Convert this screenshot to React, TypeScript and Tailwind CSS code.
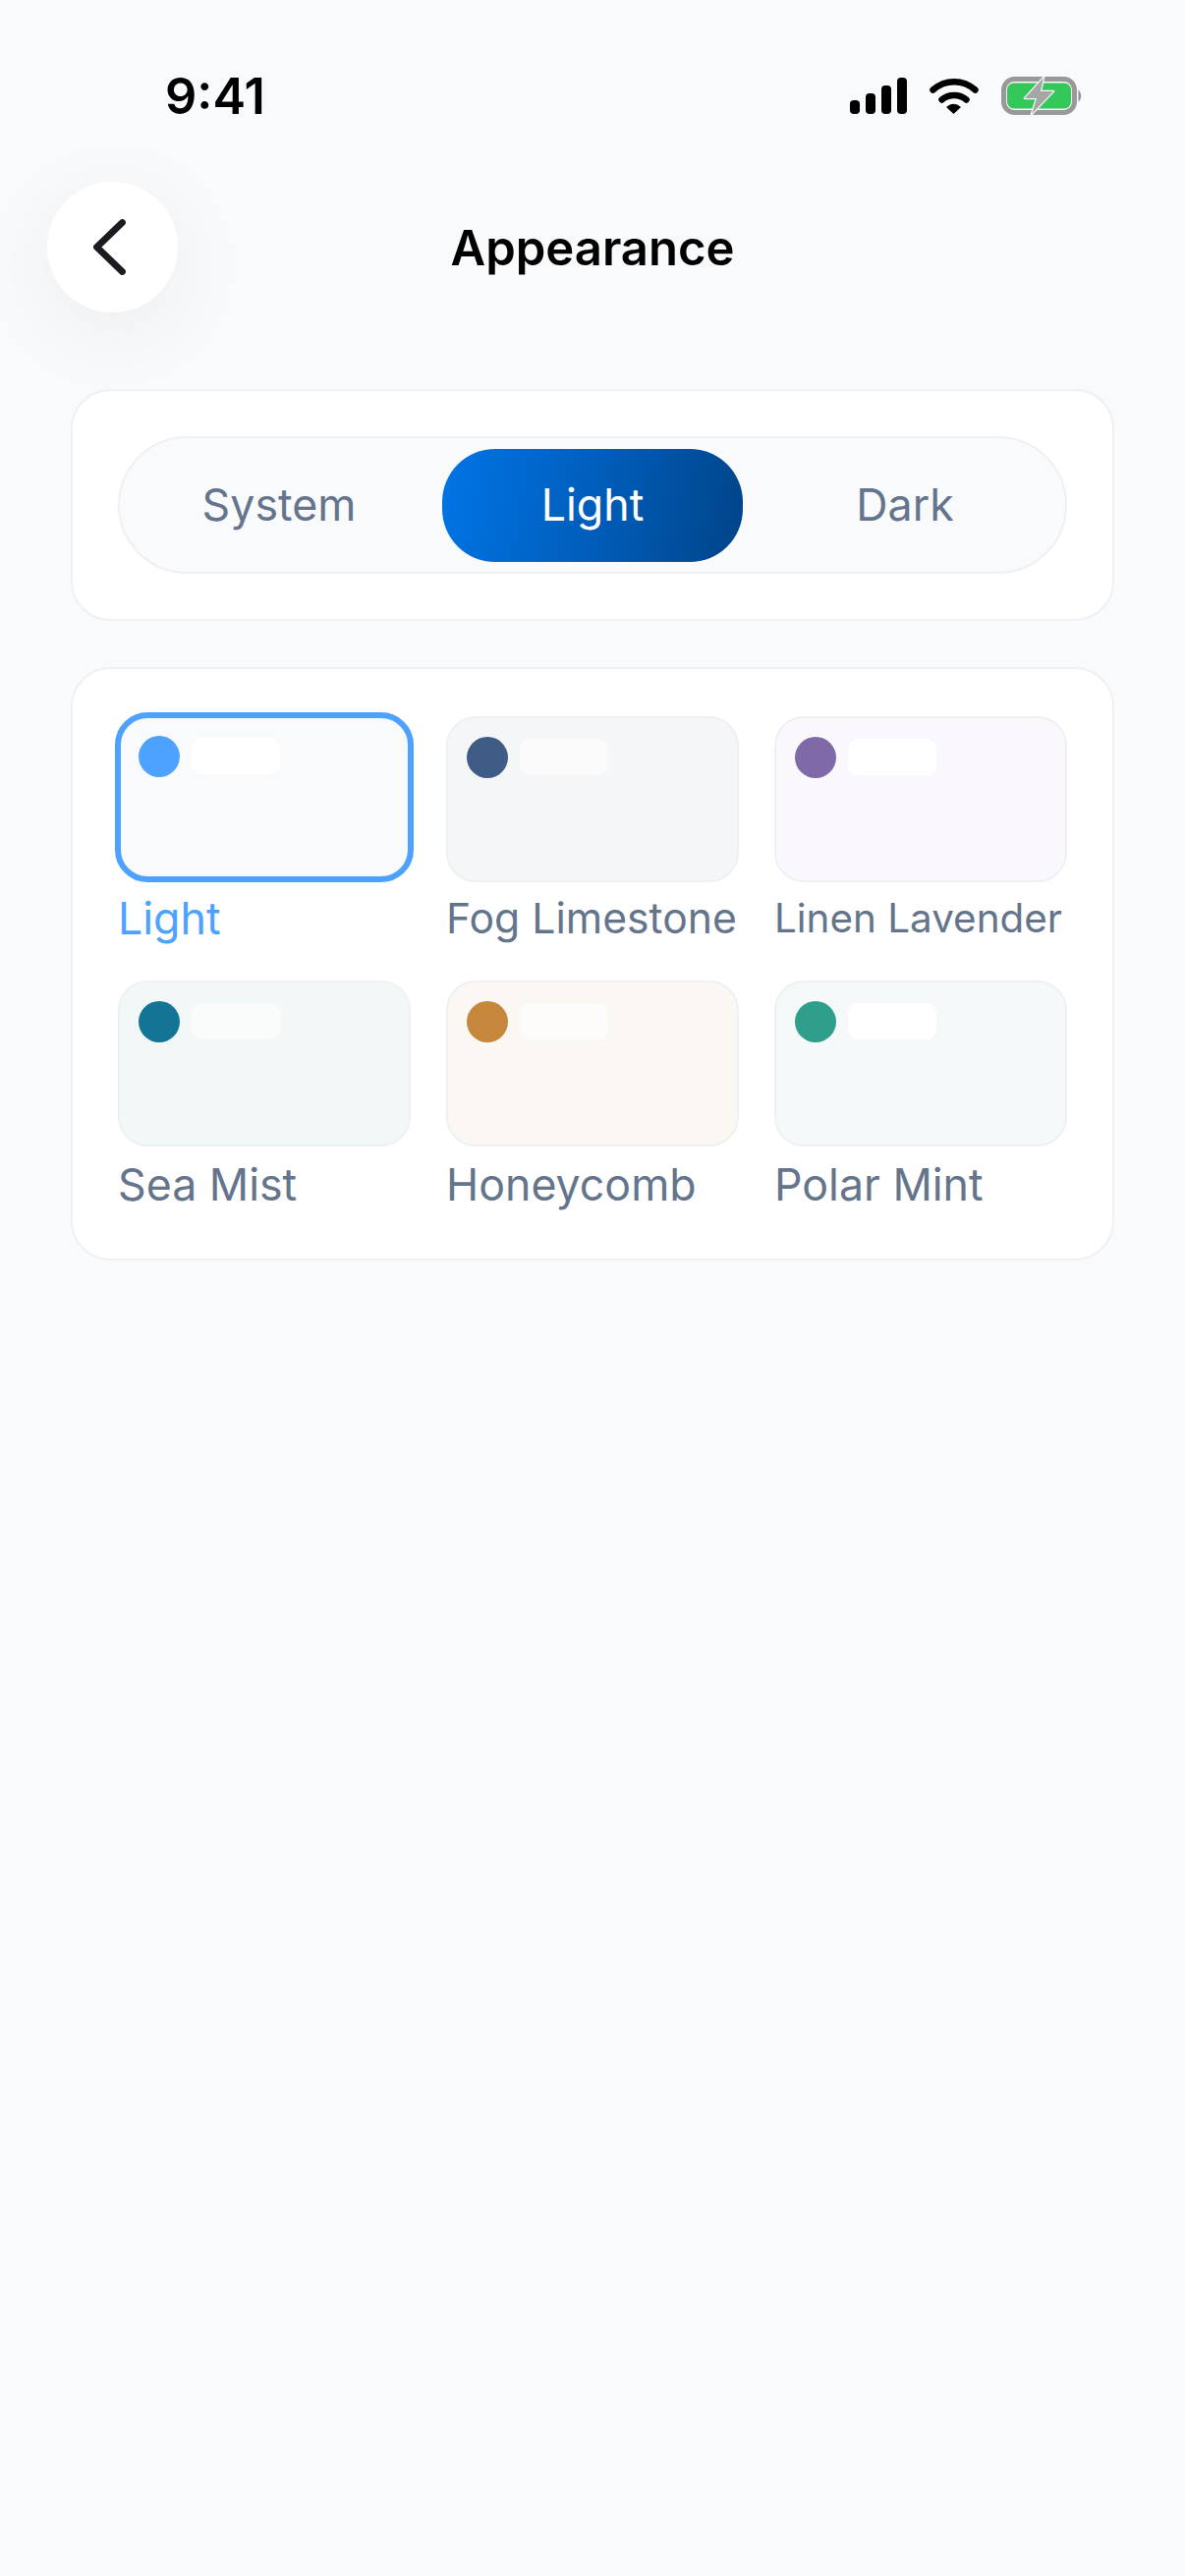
interface Theme {
  name: string
  bg: string
  dot: string
  bar: string
  label: string
}

const themes: Theme[] = [
  { name: "Light", bg: "bg-[#f8fafc]", dot: "bg-[#4da1ff]", bar: "bg-white", label: "mt-[7px] text-[44.7px] text-[#4da1ff]" },
  { name: "Fog Limestone", bg: "bg-[#f4f6f8]", dot: "bg-[#3e5c86]", bar: "bg-white/60", label: "mt-[7px] text-[42.7px] text-[#64748b]" },
  { name: "Linen Lavender", bg: "bg-[#faf8fd]", dot: "bg-[#7f69a9]", bar: "bg-white", label: "mt-[7px] text-[40.4px] text-[#64748b]" },
  { name: "Sea Mist", bg: "bg-[#f2f7f8]", dot: "bg-[#137493]", bar: "bg-white/60", label: "mt-[9px] text-[44.7px] text-[#64748b]" },
  { name: "Honeycomb", bg: "bg-[#fbf8f4]", dot: "bg-[#c4873c]", bar: "bg-white/60", label: "mt-[9px] text-[44.7px] text-[#64748b]" },
  { name: "Polar Mint", bg: "bg-[#f6f9f9]", dot: "bg-[#2f9f8b]", bar: "bg-white", label: "mt-[9px] text-[44.7px] text-[#64748b]" },
]

function SignalIcon() {
  return (
    <svg width="58" height="37" viewBox="0 0 58 37" fill="#000">
      <rect x="0" y="23" width="10" height="14" rx="4" />
      <rect x="16" y="16" width="10" height="21" rx="4" />
      <rect x="32" y="8" width="10" height="29" rx="4" />
      <rect x="48" y="0" width="10" height="37" rx="4" />
    </svg>
  )
}

function WifiIcon() {
  return (
    <svg width="50" height="37" viewBox="0 0 50 37" fill="none">
      <path d="M3.5 12.5C16 1.5 34 1.5 46.5 12.5" stroke="#000" strokeWidth="6.5" strokeLinecap="round" />
      <path d="M12.5 22.5C19.5 16.5 30.5 16.5 37.5 22.5" stroke="#000" strokeWidth="6.5" strokeLinecap="round" />
      <path d="M17 30Q24.5 23.5 32 30L24.5 37Z" fill="#000" />
    </svg>
  )
}

function BatteryIcon() {
  return (
    <svg width="83" height="39" viewBox="0 0 83 39" fill="none">
      <rect x="2.5" y="2.5" width="72" height="34" rx="11" stroke="#999" strokeWidth="5" />
      <rect x="6" y="6.5" width="65" height="26" rx="7" fill="#34c759" />
      <path d="M78.5 13Q84 19.5 78.5 26Z" fill="#8f8f8f" />
      <path d="M43 1L24 22H36L31 38L53 15H40Z" fill="#a6a6a6" stroke="#f9fafc" strokeWidth="2.5" paintOrder="stroke" strokeLinejoin="round" />
    </svg>
  )
}

function BackIcon() {
  return (
    <svg width="33" height="57" viewBox="0 0 33 57" fill="none">
      <path d="M29.5 3.5L3.5 28.5L29.5 53.5" stroke="#1a1c20" strokeWidth="6.8" strokeLinecap="round" strokeLinejoin="round" />
    </svg>
  )
}

function ThemeCard({ theme, active }: { theme: Theme; active: boolean }) {
  return (
    <div className="flex flex-col">
      <div
        className={
          active
            ? `-mx-[3px] -mt-[4px] flex h-[173px] items-start rounded-[33px] border-[6px] border-[#4da1ff] pl-[18px] pt-[18px] ${theme.bg}`
            : `flex h-[169px] items-start rounded-[30px] border-2 border-[#eef0f4] pl-[19px] pt-[19px] ${theme.bg}`
        }
      >
        <div className={`h-[42px] w-[42px] rounded-full ${theme.dot}`} />
        <div className={`ml-3 mt-[2px] h-[37px] w-[90px] rounded-[10px] ${theme.bar}`} />
      </div>
      <span className={`whitespace-nowrap leading-[60px] ${theme.label}`}>{theme.name}</span>
    </div>
  )
}

export default function App() {
  return (
    <div className="min-h-[2622px] w-full bg-[#f9fafc] font-[Inter,sans-serif]">
      {/* status bar */}
      <div className="flex h-[185px] items-start justify-between pl-[168px] pr-[104px] pt-[68px]">
        <span className="text-[50.5px] font-semibold leading-[60px] text-black">9:41</span>
        <div className="mt-[10px] flex items-center gap-[23px]">
          <SignalIcon />
          <WifiIcon />
          <BatteryIcon />
        </div>
      </div>

      {/* header */}
      <div className="grid grid-cols-[1fr_auto_1fr] items-center pl-12 pr-12">
        <button className="flex h-[133px] w-[133px] items-center justify-center rounded-full bg-white pr-[7px] shadow-[0_20px_90px_rgba(15,23,42,0.06)]">
          <BackIcon />
        </button>
        <h1 className="pt-[2px] text-[49px] font-semibold leading-[60px] text-black">Appearance</h1>
        <div />
      </div>

      <div className="mt-[78px] flex flex-col gap-[47px] px-[72px]">
        {/* mode switch */}
        <div className="rounded-[40px] border-2 border-[#eef0f4] bg-white p-[46px]">
          <div className="grid h-[140px] grid-cols-3 items-center gap-3 rounded-[70px] border-2 border-[#eef0f4] bg-[#f8fafc] px-[10px]">
            <div className="pr-[2px] pt-[2px] text-center text-[44.7px] text-[#64748b]">System</div>
            <div className="flex h-[115px] items-center justify-center rounded-[54px] bg-[linear-gradient(100deg,#0075e6_0%,#0060c0_45%,#004488_100%)] pt-[2px] text-[44.7px] text-white">
              Light
            </div>
            <div className="pt-[2px] text-center text-[44.7px] text-[#64748b]">Dark</div>
          </div>
        </div>

        {/* theme grid */}
        <div className="rounded-[40px] border-2 border-[#eef0f4] bg-white px-[46px] pb-[45px] pt-[48px]">
          <div className="grid grid-cols-3 gap-x-9 gap-y-[33px]">
            {themes.map((theme, i) => (
              <ThemeCard key={theme.name} theme={theme} active={i === 0} />
            ))}
          </div>
        </div>
      </div>
    </div>
  )
}
